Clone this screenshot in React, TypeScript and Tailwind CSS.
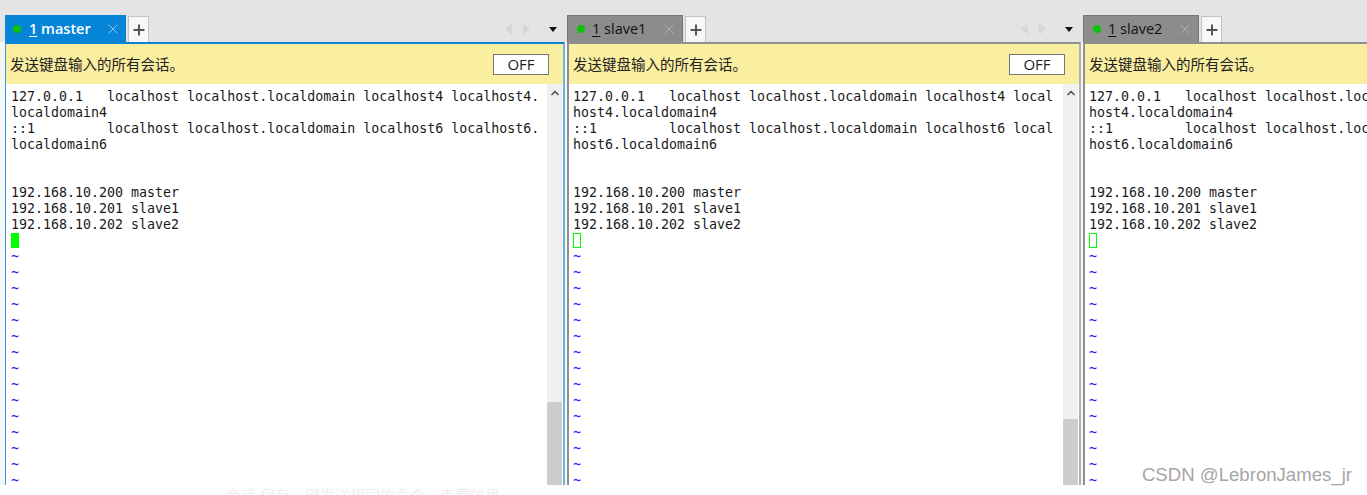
import { ChevronUp, Plus, X } from "lucide-react";

const mono = "font-['DejaVu_Sans_Mono','Liberation_Mono',monospace]";

const panes = [
  {
    name: "master",
    active: true,
    width: "w-[560px]",
    hasOff: true,
    thumb: "h-[83px]",
    lines: [
      "127.0.0.1   localhost localhost.localdomain localhost4 localhost4.",
      "localdomain4",
      "::1         localhost localhost.localdomain localhost6 localhost6.",
      "localdomain6",
    ],
  },
  {
    name: "slave1",
    active: false,
    width: "w-[514px]",
    hasOff: true,
    thumb: "h-[66px]",
    lines: [
      "127.0.0.1   localhost localhost.localdomain localhost4 local",
      "host4.localdomain4",
      "::1         localhost localhost.localdomain localhost6 local",
      "host6.localdomain6",
    ],
  },
  {
    name: "slave2",
    active: false,
    width: "flex-1",
    hasOff: false,
    thumb: "",
    lines: [
      "127.0.0.1   localhost localhost.localdomain localhost4 local",
      "host4.localdomain4",
      "::1         localhost localhost.localdomain localhost6 local",
      "host6.localdomain6",
    ],
  },
];

const hosts = ["192.168.10.200 master", "192.168.10.201 slave1", "192.168.10.202 slave2"];
const tildes = Array.from({ length: 15 });

function TabBar({ name, active, showNav }: { name: string; active: boolean; showNav: boolean }) {
  return (
    <div className="flex h-[28px] items-end">
      <div
        className={
          active
            ? "flex h-[27px] w-[121px] items-center bg-[#0684d8] pl-[8px] text-white"
            : "flex h-[27px] w-[116px] items-center border border-b-0 border-[#777777] bg-[#8c8c8c] pl-[9px] text-[#111111]"
        }
      >
        <span className="h-[8px] w-[8px] rounded-full bg-[#0cc10c]" />
        <span className={active ? "ml-[8px] text-[14.5px] font-semibold" : "ml-[7px] text-[14.5px]"}>
          <span className="underline underline-offset-2">1</span> {name}
        </span>
        <X
          className={active ? "ml-auto mr-[5px] h-[16px] w-[16px] text-[#a3d2f0]" : "ml-auto mr-[5px] h-[16px] w-[16px] text-[#b8b8b8]"}
          strokeWidth={1.25}
        />
      </div>
      <div className="ml-[2px] flex h-[26px] w-[21px] items-center justify-center border border-b-0 border-[#c4c4c4] bg-[#f7f7f7]">
        <Plus className="h-[16px] w-[16px] text-[#555555]" strokeWidth={3} />
      </div>
      {showNav && (
        <div className="mb-[7px] ml-auto mr-[8px] flex items-center">
          <span className="h-0 w-0 border-y-[6px] border-r-[7px] border-y-transparent border-r-[#d6d6d6]" />
          <span className="ml-[11px] h-0 w-0 border-y-[6px] border-l-[7px] border-y-transparent border-l-[#d6d6d6]" />
          <span className="ml-[19px] h-0 w-0 border-x-[4px] border-t-[5px] border-x-transparent border-t-[#111111]" />
        </div>
      )}
    </div>
  );
}

function Terminal({ lines, active, thumb, showScroll }: { lines: string[]; active: boolean; thumb: string; showScroll: boolean }) {
  return (
    <div className="flex min-h-0 flex-1 overflow-hidden bg-white">
      <div
        className={`min-w-0 flex-1 overflow-hidden whitespace-pre pt-[5px] text-[13.3px] leading-[16px] text-[#1a1a1a] ${mono} ${
          active ? "pl-[5px]" : "pl-[4px]"
        }`}
      >
        {lines.map((line) => (
          <div key={line} className="h-[16px]">
            {line}
          </div>
        ))}
        <div className="h-[32px]" />
        {hosts.map((host) => (
          <div key={host} className="h-[16px]">
            {host}
          </div>
        ))}
        <div className="h-[16px]">
          <div className={active ? "h-[15px] w-[8px] bg-[#00ff00]" : "h-[15px] w-[8px] border border-[#00ff00]"} />
        </div>
        {tildes.map((_, i) => (
          <div key={i} className="h-[16px] text-[#1a1aff]">
            ~
          </div>
        ))}
      </div>
      {showScroll && (
        <div className="mr-[1px] flex w-[15px] shrink-0 flex-col bg-[#f0f0f0]">
          <div className="flex h-[18px] items-center justify-center">
            <ChevronUp className="h-[12px] w-[12px] text-[#555555]" strokeWidth={3.5} />
          </div>
          <div className="flex-1" />
          <div className={`${thumb} bg-[#cdcdcd]`} />
        </div>
      )}
    </div>
  );
}

function Pane({ pane }: { pane: (typeof panes)[number] }) {
  return (
    <div className={`flex h-full shrink-0 flex-col ${pane.width}`}>
      <TabBar name={pane.name} active={pane.active} showNav={pane.hasOff} />
      <div
        className={
          pane.active
            ? "flex min-h-0 flex-1 flex-col border-l border-r-2 border-t-2 border-l-[#3f97d6] border-r-[#6cb3e0] border-t-[#0684d8]"
            : "flex min-h-0 flex-1 flex-col border-x-2 border-t-2 border-[#8f8f8f] border-r-[#b0b0b0]"
        }
      >
        <div className="flex h-[40px] shrink-0 items-center justify-between bg-[#faeea0] pl-[4px] pr-[14px] text-[14.5px] text-[#222222]">
          <span className="pt-[2px]">发送键盘输入的所有会话。</span>
          {pane.hasOff && (
            <span className="flex h-[21px] w-[56px] items-center justify-center border border-[#777777] bg-white text-[15px]">OFF</span>
          )}
        </div>
        <Terminal lines={pane.lines} active={pane.active} thumb={pane.thumb} showScroll={pane.hasOff} />
      </div>
    </div>
  );
}

export default function App() {
  return (
    <div className="relative flex h-[495px] w-[1367px] flex-col overflow-hidden bg-white font-['Open_Sans','Noto_Sans_CJK_SC',sans-serif]">
      <div className="h-[14px] shrink-0 bg-[#e4e4e4]" />
      <div className="flex h-[471px] shrink-0 gap-[2px] bg-[linear-gradient(#e4e4e4_0,#e4e4e4_28px,#f6f6f6_28px)] pl-[5px]">
        {panes.map((pane) => (
          <Pane key={pane.name} pane={pane} />
        ))}
      </div>
      <div className="overflow-hidden pl-[226px] text-[15px] leading-[20px] text-[#eeeeee]">会话 保存一键发送相同的命令，查看效果…</div>
      <div className="absolute bottom-[10px] right-[15px] font-['Liberation_Sans',sans-serif] text-[18.6px] leading-[20px] text-[#a5a5a5]">
        CSDN @LebronJames_jr
      </div>
    </div>
  );
}
